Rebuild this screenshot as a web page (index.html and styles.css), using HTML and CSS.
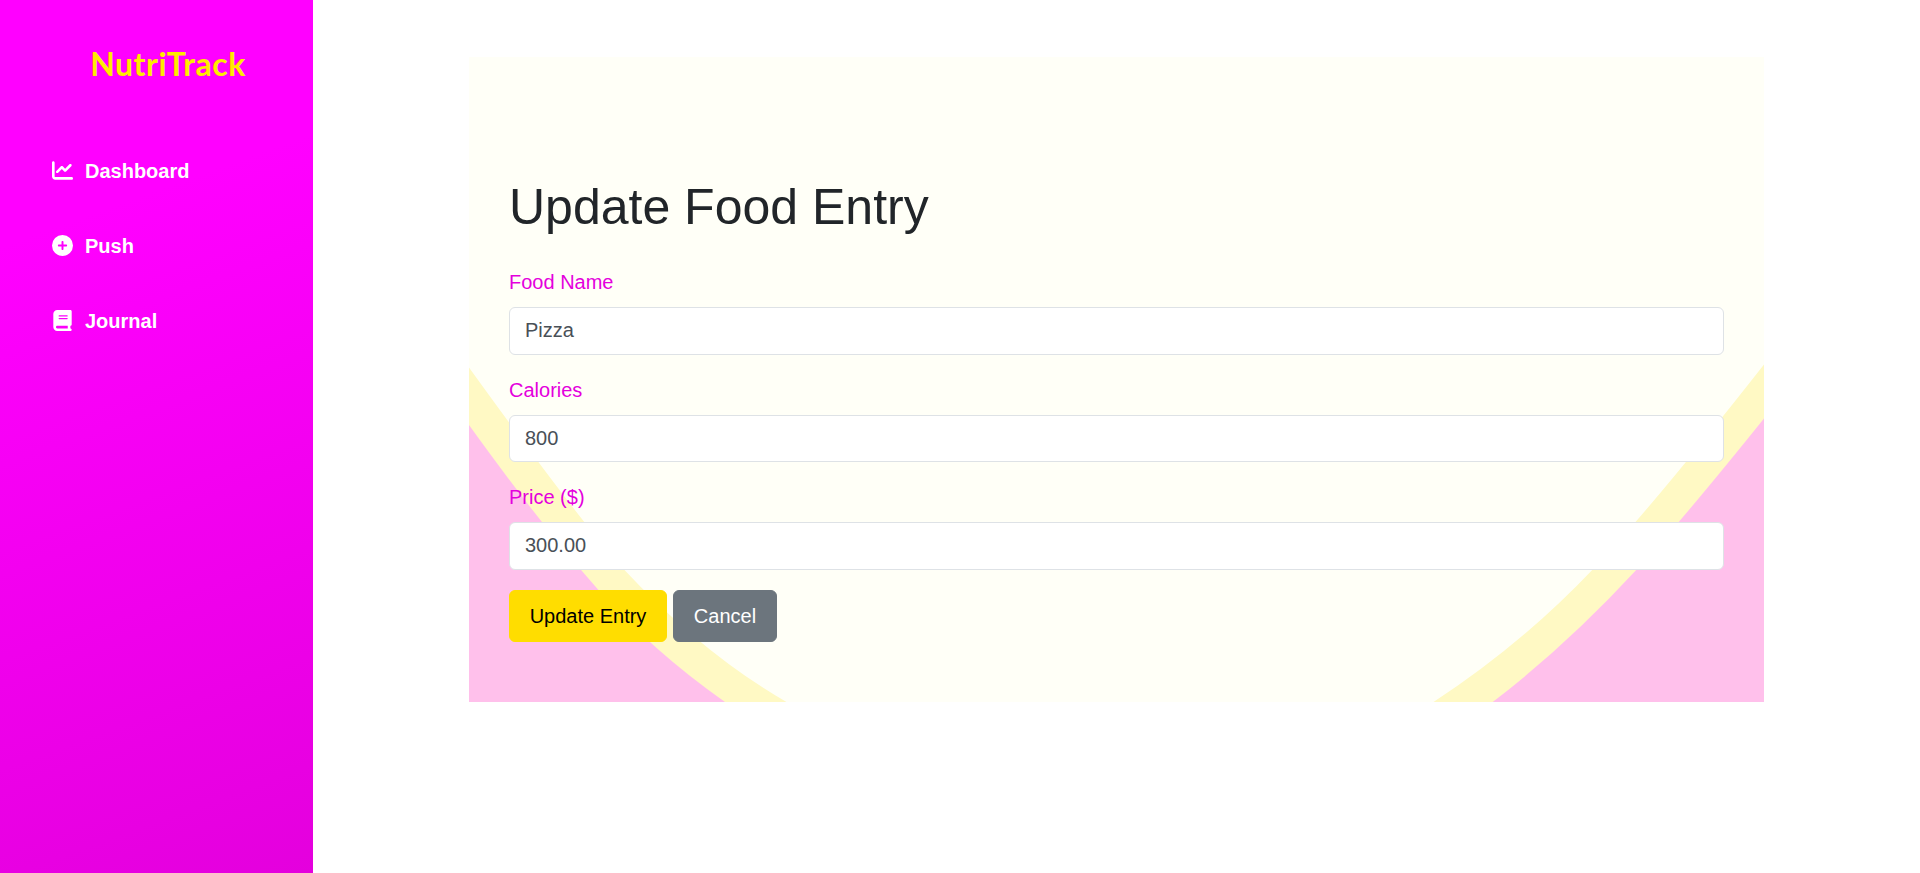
FILE: index.html
```html
<!DOCTYPE html>
<html lang="en">
<head>
<meta charset="utf-8">
<title>NutriTrack</title>
<link rel="stylesheet" href="styles.css">
</head>
<body>
<div class="layout">
  <aside class="sidebar">
    <div class="brand">NutriTrack</div>
    <nav class="nav">
      <a class="nav-link"><svg class="icon" viewBox="0 0 512 512"><path d="M64 64c0-17.700-14.300-32-32-32S0 46.300 0 64v336c0 44.200 35.800 80 80 80h400c17.700 0 32-14.300 32-32s-14.300-32-32-32H80c-8.800 0-16-7.200-16-16V64zm406.600 86.600c12.500-12.500 12.500-32.800 0-45.300s-32.800-12.500-45.300 0L320 210.700l-57.400-57.400c-12.500-12.500-32.800-12.500-45.300 0l-112 112c-12.500 12.500-12.500 32.800 0 45.300s32.800 12.500 45.300 0L240 221.300l57.400 57.400c12.500 12.500 32.800 12.500 45.300 0l128-128z"/></svg><span>Dashboard</span></a>
      <a class="nav-link"><svg class="icon" viewBox="0 0 512 512"><path d="M256 512A256 256 0 1 0 256 0a256 256 0 1 0 0 512zM232 344V280H168c-13.300 0-24-10.700-24-24s10.700-24 24-24h64V168c0-13.300 10.700-24 24-24s24 10.700 24 24v64h64c13.300 0 24 10.700 24 24s-10.700 24-24 24H280v64c0 13.300-10.700 24-24 24s-24-10.700-24-24z"/></svg><span>Push</span></a>
      <a class="nav-link"><svg class="icon" viewBox="-32 0 512 512"><path d="M96 0C43 0 0 43 0 96v320c0 53 43 96 96 96h320c17.700 0 32-14.300 32-32s-14.300-32-32-32v-64c17.700 0 32-14.300 32-32V32c0-17.700-14.300-32-32-32H96zm0 384h256v64H96c-17.700 0-32-14.300-32-32s14.300-32 32-32zm32-240c0-8.800 7.200-16 16-16h192c8.800 0 16 7.200 16 16s-7.200 16-16 16H144c-8.800 0-16-7.200-16-16zm16 48h192c8.800 0 16 7.200 16 16s-7.200 16-16 16H144c-8.800 0-16-7.200-16-16s7.200-16 16-16z"/></svg><span>Journal</span></a>
    </nav>
  </aside>
  <main class="main">
    <section class="card">
      <svg class="card-art" viewBox="469 57 1295 645" preserveAspectRatio="none">
        <path class="band" d="M469 367.500Q582 524 624 569.500Q703 654 786.500 702H469z"/>
        <path class="corner" d="M469 425Q542 526.200 598 589.500Q652 650.500 725 702H469z"/>
        <path class="band" d="M1764 364.500Q1653 506 1592.700 569.500Q1521 645 1433.500 702H1764z"/>
        <path class="corner" d="M1764 418.500Q1680 523 1636.700 569.500Q1566 646 1492.700 702H1764z"/>
      </svg>
      <form class="form">
        <h1 class="title">Update Food Entry</h1>
        <div class="field"><label class="label" for="name">Food Name</label><input class="input" id="name" type="text" value="Pizza"></div>
        <div class="field"><label class="label" for="calories">Calories</label><input class="input" id="calories" type="text" value="800"></div>
        <div class="field"><label class="label" for="price">Price ($)</label><input class="input" id="price" type="text" value="300.00"></div>
        <div class="actions"><button class="btn btn-primary" type="button">Update Entry</button><button class="btn btn-secondary" type="button">Cancel</button></div>
      </form>
    </section>
  </main>
</div>
</body>
</html>
```
FILE: styles.css
```css
*, *::before, *::after { box-sizing: border-box; }
html { font-size: 20px; }
body {
  margin: 0;
  background: #fff;
  color: #212529;
  font: 1rem/1.5 "Liberation Sans", Arial, sans-serif;
}
.layout { display: flex; height: 100vh; overflow: hidden; }
.sidebar {
  flex: 0 0 313px;
  background: linear-gradient(160deg, #ff00ff 0%, #ff00ff 25%, #e400dd 100%);
}
.brand {
  margin-top: 40px;
  padding-left: 23px;
  text-align: center;
  font: 700 32px/48px Lato, "Noto Sans", sans-serif;
  letter-spacing: 0.5px;
  color: #ffeb00;
}
.nav { display: flex; flex-direction: column; gap: 45px; padding: 67.5px 0 0 52px; }
.nav-link { display: flex; align-items: center; gap: 12px; height: 30px; color: #fff; font-weight: 700; }
.icon { width: 21px; height: 21px; fill: currentColor; }
.main { flex: 1; padding: 57px 156px 0; }
.card { position: relative; height: 645px; padding: 120.2px 40px 0; background: #fffff7; }
.card-art { position: absolute; inset: 0; width: 100%; height: 100%; }
.band { fill: #fff9c4; }
.corner { fill: #ffc0eb; }
.form { position: relative; }
.title { margin: 0 0 30px; font-size: 50px; font-weight: 400; line-height: 60px; }
.field { margin-bottom: 20px; }
.label { display: block; margin-bottom: 10px; color: #e400dd; }
.input {
  display: block;
  width: 100%;
  height: 47.5px;
  padding: 6.8px 15px 7.2px;
  border: 1px solid #dee2e6;
  border-radius: 6px;
  background: #fff;
  color: #495057;
  font: inherit;
}
.actions { display: flex; gap: 6px; }
.btn {
  height: 52px;
  padding: 0 19.5px;
  border: 1px solid transparent;
  border-radius: 6px;
  font: inherit;
}
.btn-primary { width: 158px; background: #ffdd00; border-color: #ffdd00; color: #000; }
.btn-secondary { width: 104px; background: #6c757d; border-color: #6c757d; color: #fff; }
```
